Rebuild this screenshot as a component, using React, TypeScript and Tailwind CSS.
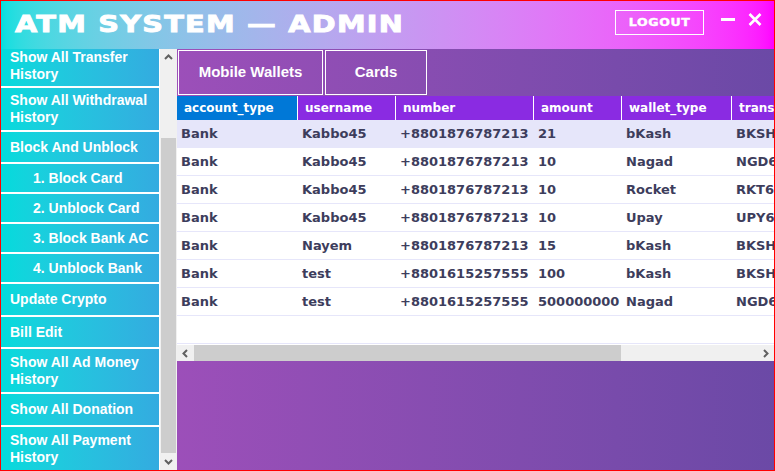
const menu = [
  { label: "Show All Transfer History", h: "h-[37px] items-start", sub: false },
  { label: "Show All Withdrawal History", h: "h-[42px] items-center", sub: false },
  { label: "Block And Unblock", h: "h-[30px] items-center", sub: false },
  { label: "1. Block Card", h: "h-[28px] items-center", sub: true },
  { label: "2. Unblock Card", h: "h-[28px] items-center", sub: true },
  { label: "3. Block Bank AC", h: "h-[28px] items-center", sub: true },
  { label: "4. Unblock Bank", h: "h-[28px] items-center", sub: true },
  { label: "Update Crypto", h: "h-[31px] items-center", sub: false },
  { label: "Bill Edit", h: "h-[30px] items-center", sub: false },
  { label: "Show All Ad Money History", h: "h-[43px] items-center", sub: false },
  { label: "Show All Donation", h: "h-[31px] items-center", sub: false },
  { label: "Show All Payment History", h: "h-[43px] items-center", sub: false },
];

const rows = [
  ["Bank", "Kabbo45", "+8801876787213", "21", "bKash", "BKSH68120"],
  ["Bank", "Kabbo45", "+8801876787213", "10", "Nagad", "NGD68121"],
  ["Bank", "Kabbo45", "+8801876787213", "10", "Rocket", "RKT68122"],
  ["Bank", "Kabbo45", "+8801876787213", "10", "Upay", "UPY68123"],
  ["Bank", "Nayem", "+8801876787213", "15", "bKash", "BKSH68124"],
  ["Bank", "test", "+8801615257555", "100", "bKash", "BKSH68125"],
  ["Bank", "test", "+8801615257555", "500000000", "Nagad", "NGD68126"],
];

const cols = [
  { name: "account_type", w: "w-[121px]" },
  { name: "username", w: "w-[98px]" },
  { name: "number", w: "w-[138px]" },
  { name: "amount", w: "w-[88px]" },
  { name: "wallet_type", w: "w-[110px]" },
  { name: "transaction_id", w: "w-[120px]" },
];

const Chevron = ({ dir }: { dir: "up" | "down" | "left" | "right" }) => {
  const d = {
    up: "M2 7 L5.5 3.5 L9 7",
    down: "M2 4 L5.5 7.5 L9 4",
    left: "M7 2 L3.5 5.5 L7 9",
    right: "M4 2 L7.5 5.5 L4 9",
  }[dir];
  return (
    <svg width="11" height="11" viewBox="0 0 11 11">
      <path d={d} fill="none" stroke="#606060" strokeWidth="2" />
    </svg>
  );
};

export default function App() {
  return (
    <div className="w-[775px] h-[471px] border border-[#ff0000] flex flex-col overflow-hidden bg-white">
      {/* title bar */}
      <div className="h-[48px] shrink-0 flex items-center bg-gradient-to-r from-[#00dfdf] to-[#ff00ff]">
        <div
          className="ml-[14px] -mt-[2px] text-white text-[23px] font-bold origin-left scale-x-[1.25] tracking-[1px] whitespace-nowrap [-webkit-text-stroke:0.9px_white]"
          style={{ fontFamily: '"DejaVu Sans", sans-serif' }}
        >
          ATM SYSTEM — ADMIN
        </div>
        <div className="ml-auto flex items-center">
          <div className="w-[89px] h-[25px] border border-white flex items-center justify-center -mt-[6px]">
            <span
              className="text-white text-[10px] font-bold scale-x-[1.25] tracking-[0.5px] [-webkit-text-stroke:0.4px_white]"
              style={{ fontFamily: '"DejaVu Sans", sans-serif' }}
            >
              LOGOUT
            </span>
          </div>
          <div className="w-[14px] h-[3px] bg-white ml-[17px] -mt-[11px]" />
          <svg width="14" height="13" viewBox="0 0 14 13" className="ml-[13px] mr-[12px] -mt-[11px]">
            <path d="M1.5 1 L12.5 12 M12.5 1 L1.5 12" stroke="white" strokeWidth="2.6" />
          </svg>
        </div>
      </div>

      <div className="flex flex-1 min-h-0">
        {/* sidebar */}
        <div className="w-[159px] shrink-0 flex flex-col gap-[2px] bg-white pr-[1px] overflow-hidden">
          {menu.map((m) => (
            <div
              key={m.label}
              className={`${m.h} shrink-0 flex bg-gradient-to-r from-[#02dbdc] to-[#33abe0] text-white text-[14px] font-bold leading-[17px] ${
                m.sub ? "pl-[32px]" : "pl-[9px] pr-[2px]"
              }`}
              style={{ fontFamily: '"Liberation Sans", Arial, sans-serif' }}
            >
              {m.label}
            </div>
          ))}
        </div>
        {/* sidebar scrollbar */}
        <div className="w-[17px] shrink-0 bg-[#f0f0f0] flex flex-col">
          <div className="h-[17px] flex items-center justify-center">
            <Chevron dir="up" />
          </div>
          <div className="flex-1 pt-[72px] px-[1px]">
            <div className="h-full bg-[#cdcdcd]" />
          </div>
          <div className="h-[17px] flex items-center justify-center">
            <Chevron dir="down" />
          </div>
        </div>

        {/* main */}
        <div className="flex-1 min-w-0 bg-gradient-to-r from-[#9c4fb9] to-[#6b49a6] flex flex-col pt-[1px]">
          <div
            className="flex gap-[2px] ml-[1px] h-[45px] text-white text-[15px] font-bold"
            style={{ fontFamily: '"Liberation Sans", Arial, sans-serif' }}
          >
            <div className="w-[145px] border border-white flex items-center justify-center">Mobile Wallets</div>
            <div className="w-[102px] border border-white flex items-center justify-center">Cards</div>
          </div>

          <div className="mt-[1px] h-[265px] bg-white flex flex-col overflow-hidden">
            <div
              className="flex h-[24px] shrink-0 text-white text-[12px] font-bold whitespace-nowrap"
              style={{ fontFamily: '"DejaVu Sans", sans-serif' }}
            >
              {cols.map((c, i) => (
                <div
                  key={c.name}
                  className={`${c.w} shrink-0 flex items-center pl-[7px] border-r border-white ${
                    i === 0 ? "bg-[#0078d7]" : "bg-[#8a2be2]"
                  }`}
                >
                  {c.name}
                </div>
              ))}
            </div>
            <div
              className="flex-1 text-[13px] font-bold text-[#3d3d5c]"
              style={{ fontFamily: '"DejaVu Sans", sans-serif' }}
            >
              {rows.map((r, ri) => (
                <div
                  key={ri}
                  className={`flex h-[28px] border-b-[1px] border-[#e6e6fa] whitespace-nowrap ${
                    ri === 0 ? "bg-[#e6e6fa]" : ""
                  }`}
                >
                  {r.map((v, ci) => (
                    <div key={ci} className={`${cols[ci].w} shrink-0 flex items-center pl-[4px] overflow-hidden`}>
                      {v}
                    </div>
                  ))}
                </div>
              ))}
              <div className="h-[28px] border-b-[1px] border-[#e6e6fa]" />
            </div>
            {/* horizontal scrollbar */}
            <div className="h-[16px] shrink-0 bg-[#f0f0f0] flex items-center">
              <div className="w-[17px] flex items-center justify-center">
                <Chevron dir="left" />
              </div>
              <div className="w-[427px] h-full bg-[#cdcdcd]" />
              <div className="ml-auto w-[17px] flex items-center justify-center">
                <Chevron dir="right" />
              </div>
            </div>
          </div>
        </div>
      </div>
    </div>
  );
}
